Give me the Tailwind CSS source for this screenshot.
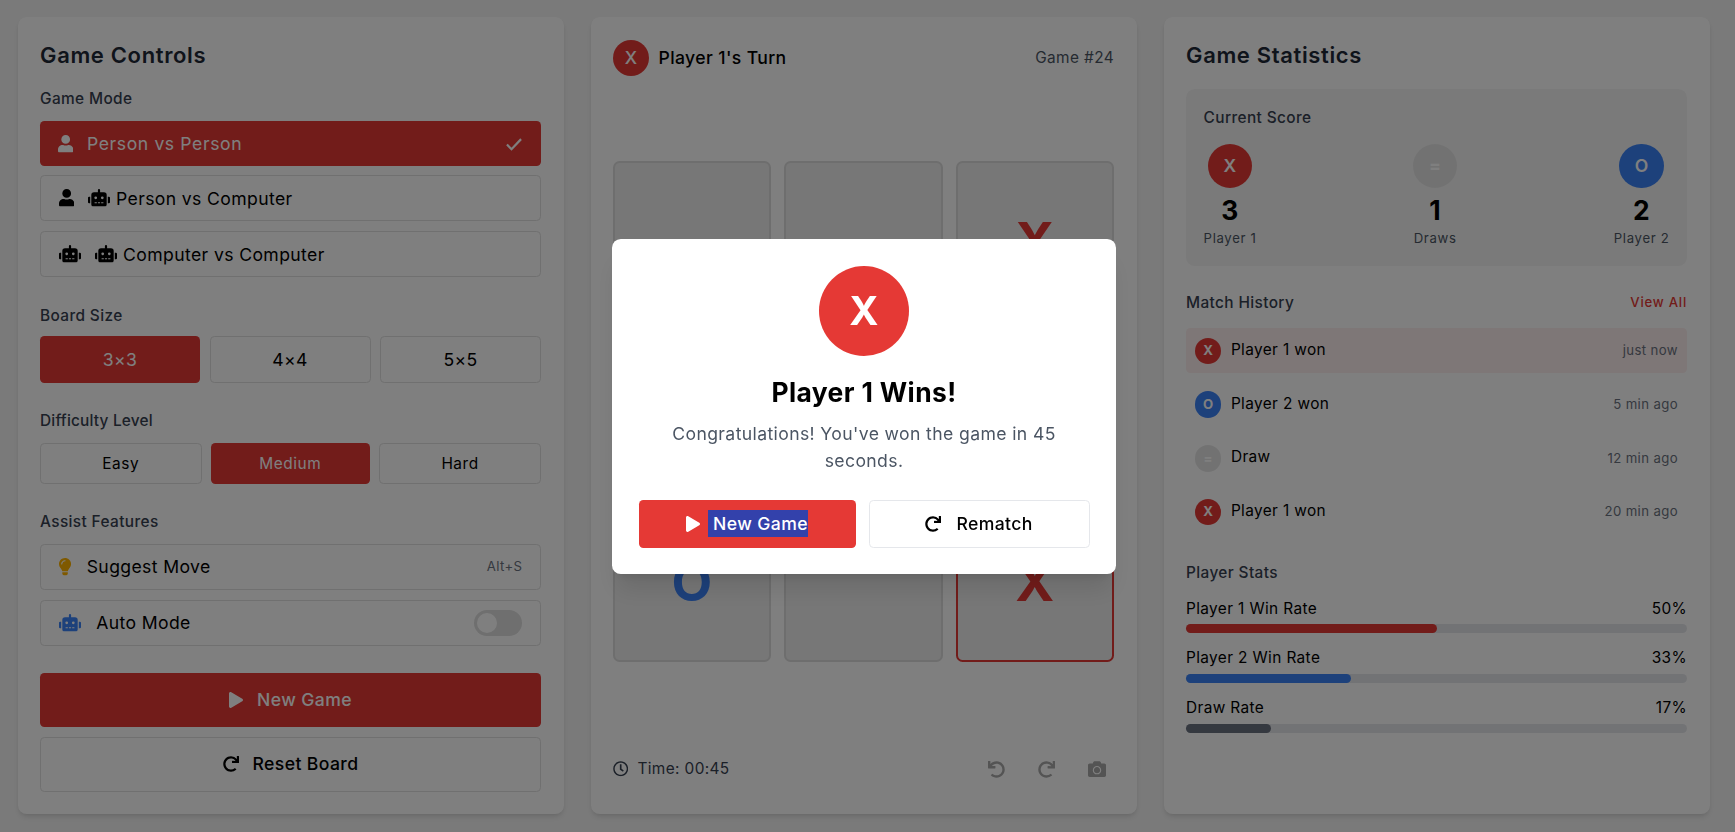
<!DOCTYPE html>
<html lang="en" class="text-[17.6px] font-[Inter,sans-serif] tracking-[0.38px]">
<head>
<meta charset="UTF-8">
<meta name="viewport" content="width=device-width, initial-scale=1.0">
<title>Tic Tac Toe</title>
<script src="https://cdn.jsdelivr.net/npm/@tailwindcss/browser@4"></script>
</head>
<body class="h-screen overflow-hidden bg-[#f5f5f5] text-[#111111]">

<!-- icon set -->
<svg class="hidden">
  <symbol id="i-user" viewBox="0 0 448 512"><path fill="currentColor" d="M224 256c70.7 0 128-57.3 128-128S294.7 0 224 0 96 57.3 96 128s57.3 128 128 128zm89.6 32h-16.7c-22.2 10.2-46.9 16-72.9 16s-50.6-5.8-72.9-16h-16.7C60.2 288 0 348.2 0 422.4V464c0 26.5 21.5 48 48 48h352c26.5 0 48-21.5 48-48v-41.6c0-74.2-60.2-134.4-134.4-134.4z"/></symbol>
  <symbol id="i-robot" viewBox="0 0 640 512"><path fill="currentColor" d="M32,224H64V416H32A31.96166,31.96166,0,0,1,0,384V256A31.96166,31.96166,0,0,1,32,224Zm512-48V448a64.06328,64.06328,0,0,1-64,64H160a64.06328,64.06328,0,0,1-64-64V176a79.974,79.974,0,0,1,80-80H288V32a32,32,0,0,1,64,0V96H464A79.974,79.974,0,0,1,544,176ZM264,256a40,40,0,1,0-40,40A39.997,39.997,0,0,0,264,256Zm-8,128H192v32h64Zm96,0H288v32h64ZM456,256a40,40,0,1,0-40,40A39.997,39.997,0,0,0,456,256Zm-8,128H384v32h64ZM640,256V384a31.96166,31.96166,0,0,1-32,32H576V224h32A31.96166,31.96166,0,0,1,640,256Z"/></symbol>
  <symbol id="i-check" viewBox="0 0 512 512"><path fill="none" stroke="currentColor" stroke-width="70" d="M30 275 L176 421 L482 100"/></symbol>
  <symbol id="i-bulb" viewBox="0 0 352 512"><path fill="currentColor" d="M96.06 454.35c.01 6.29 1.87 12.45 5.36 17.69l17.09 25.69a31.99 31.99 0 0 0 26.64 14.28h61.71a31.99 31.99 0 0 0 26.64-14.28l17.09-25.69a31.989 31.989 0 0 0 5.36-17.69l.04-38.35H96.01l.05 38.35zM0 176c0 44.37 16.45 84.85 43.56 115.78 16.52 18.85 42.36 58.23 52.21 91.45.04.26.07.52.11.78h160.24c.04-.26.07-.51.11-.78 9.85-33.22 35.69-72.6 52.21-91.45C335.55 260.85 352 220.37 352 176 352 78.61 272.91-.3 175.45 0 73.44.31 0 82.97 0 176zm176-80c-44.11 0-80 35.89-80 80 0 8.84-7.16 16-16 16s-16-7.16-16-16c0-61.76 50.24-112 112-112 8.84 0 16 7.16 16 16s-7.16 16-16 16z"/></symbol>
  <symbol id="i-play" viewBox="0 0 448 512"><path fill="currentColor" d="M424.4 214.7L72.4 6.6C43.8-10.3 0 6.1 0 47.9V464c0 37.5 40.7 60.1 72.4 41.3l352-208c31.4-18.5 31.5-64.1 0-82.6z"/></symbol>
  <symbol id="i-redo" viewBox="0 0 512 512"><path fill="currentColor" d="M500.33 0h-47.41a12 12 0 0 0-12 12.57l4 82.76A247.42 247.42 0 0 0 256 8C119.34 8 7.9 119.53 8 256.19 8.1 393.07 119.1 504 256 504a247.1 247.1 0 0 0 166.18-63.91 12 12 0 0 0 .48-17.43l-34-34a12 12 0 0 0-16.38-.55A176 176 0 1 1 402.1 157.8l-101.53-4.87a12 12 0 0 0-12.57 12v47.41a12 12 0 0 0 12 12h200.33a12 12 0 0 0 12-12V12a12 12 0 0 0-12-12z"/></symbol>
  <symbol id="i-undo" viewBox="0 0 512 512"><path fill="currentColor" d="M212.333 224.333H12c-6.627 0-12-5.373-12-12V12C0 5.373 5.373 0 12 0h48c6.627 0 12 5.373 12 12v78.112C117.773 39.279 184.26 7.47 258.175 8.007c136.906.994 246.448 111.623 246.157 248.532C504.041 393.258 393.12 504 256.333 504c-64.089 0-122.496-24.313-166.51-64.215-5.099-4.622-5.334-12.554-.467-17.42l33.967-33.967c4.474-4.474 11.662-4.717 16.401-.525C170.76 415.336 211.58 432 256.333 432c97.268 0 176-78.716 176-176 0-97.267-78.716-176-176-176-58.496 0-110.28 28.476-142.274 72.333h98.274c6.627 0 12 5.373 12 12v48c0 6.627-5.373 12-12 12z"/></symbol>
  <symbol id="i-camera" viewBox="0 0 512 512"><path fill="currentColor" d="M512 144v288c0 26.5-21.5 48-48 48H48c-26.5 0-48-21.5-48-48V144c0-26.5 21.5-48 48-48h88l12.3-32.9c7-18.7 24.9-31.1 44.9-31.1h125.5c20 0 37.9 12.4 44.9 31.1L376 96h88c26.5 0 48 21.5 48 48zM376 288c0-66.2-53.8-120-120-120s-120 53.8-120 120 53.8 120 120 120 120-53.8 120-120zm-32 0c0 48.5-39.5 88-88 88s-88-39.5-88-88 39.5-88 88-88 88 39.5 88 88z"/></symbol>
  <symbol id="i-clock" viewBox="0 0 512 512"><path fill="currentColor" d="M256 8C119 8 8 119 8 256s111 248 248 248 248-111 248-248S393 8 256 8zm0 448c-110.5 0-200-89.5-200-200S145.5 56 256 56s200 89.5 200 200-89.5 200-200 200zm61.8-104.4l-84.9-61.7c-3.1-2.3-4.9-5.9-4.9-9.7V116c0-6.6 5.4-12 12-12h32c6.6 0 12 5.4 12 12v141.7l66.8 48.6c5.4 3.9 6.5 11.4 2.6 16.8L334.6 349c-3.9 5.3-11.4 6.5-16.8 2.6z"/></symbol>
</svg>

<div class="grid grid-cols-3 gap-[27px] w-[1692px] h-[797px] ml-[18px] mt-[17px]">

  <!-- game controls -->
  <section class="bg-white rounded-lg shadow-md pl-[22px] pr-[23px] pt-[23px]">
    <h2 class="text-xl font-semibold text-[#1f2937] tracking-[0.65px] mb-[17.5px]">Game Controls</h2>

    <div class="text-sm font-medium text-[#374151] mb-[11px]">Game Mode</div>
    <div class="flex items-center h-[45px] px-4 mb-[8.5px] rounded bg-[#e53935] text-white">
      <svg class="w-[15.4px] h-[17.6px] mr-[14px]"><use href="#i-user"/></svg>
      <span class="tracking-[0.6px]">Person vs Person</span>
      <svg class="w-[16px] h-[16px] ml-auto mr-[1px]"><use href="#i-check"/></svg>
    </div>
    <div class="flex items-center h-[46px] px-4 mb-[10px] rounded border border-[#e0e0e0]">
      <svg class="w-[15.4px] h-[17.6px] mr-[14px] text-black"><use href="#i-user"/></svg>
      <svg class="w-[22px] h-[17.6px] mr-[6px] text-black"><use href="#i-robot"/></svg>
      <span class="text-black pt-[2px]">Person vs Computer</span>
    </div>
    <div class="flex items-center h-[46px] px-4 mb-[27px] rounded border border-[#e0e0e0]">
      <svg class="w-[22px] h-[17.6px] mr-[14.5px] text-black"><use href="#i-robot"/></svg>
      <svg class="w-[22px] h-[17.6px] mr-[6px] text-black"><use href="#i-robot"/></svg>
      <span class="text-black pt-[2px]">Computer vs Computer</span>
    </div>

    <div class="text-sm font-medium text-[#374151] mt-[28px] mb-[9.5px]">Board Size</div>
    <div class="grid grid-cols-[160px_161px_161px] gap-[9.5px] mb-[26.5px] h-[47px] text-black">
      <div class="flex items-center justify-center rounded bg-[#e53935] text-white">3×3</div>
      <div class="flex items-center justify-center rounded border border-[#e0e0e0]">4×4</div>
      <div class="flex items-center justify-center rounded border border-[#e0e0e0]">5×5</div>
    </div>

    <div class="text-sm font-medium text-[#374151] tracking-[0.2px] mb-[11px]">Difficulty Level</div>
    <div class="grid grid-cols-[161.5px_159px_162px] gap-[9.25px] mb-[26.5px] h-[41.5px] text-black text-sm tracking-[0.55px]">
      <div class="flex items-center justify-center rounded border border-[#e0e0e0]">Easy</div>
      <div class="flex items-center justify-center rounded bg-[#e53935] text-white">Medium</div>
      <div class="flex items-center justify-center rounded border border-[#e0e0e0]">Hard</div>
    </div>

    <div class="text-sm font-medium text-[#374151] mb-[11px]">Assist Features</div>
    <div class="flex items-center h-[46px] px-4 mb-[10px] rounded border border-[#e0e0e0] text-black">
      <svg class="w-[12.1px] h-[17.6px] mr-[16px] text-[#ffb300]"><use href="#i-bulb"/></svg>
      <span>Suggest Move</span>
      <span class="ml-auto text-xs text-[#6b7280]">Alt+S</span>
    </div>
    <div class="flex items-center h-[46.5px] px-4 mb-[27px] rounded border border-[#e0e0e0] text-black">
      <svg class="w-[22px] h-[17.6px] mr-[15.6px] text-[#3b82f6]"><use href="#i-robot"/></svg>
      <span>Auto Mode</span>
      <span class="ml-auto w-[48.4px] h-[26.4px] rounded-full bg-[#dedede] flex items-center pl-[3px]">
        <span class="w-[20px] h-[20px] rounded-full bg-white"></span>
      </span>
    </div>

    <div class="flex items-center justify-center h-[54px] mb-[9.5px] rounded bg-[#e53935] text-white font-medium">
      <svg class="w-[14px] h-[16px] mr-[14px]"><use href="#i-play"/></svg>
      <span>New Game</span>
    </div>
    <div class="flex items-center justify-center h-[55px] rounded border border-[#e0e0e0] text-black font-medium">
      <svg class="w-[16px] h-[16px] mr-[14px]"><use href="#i-redo"/></svg>
      <span>Reset Board</span>
    </div>
  </section>

  <!-- board -->
  <section class="bg-white rounded-lg shadow-md pl-[22px] pr-[23px] pt-[23px]">
    <div class="flex items-center justify-between h-[36px] mb-[85px]">
      <div class="flex items-center gap-[9.5px]">
        <span class="flex items-center justify-center w-[36px] h-[36px] rounded-full bg-[#e53935] text-white font-medium">X</span>
        <span class="text-black font-medium">Player 1's Turn</span>
      </div>
      <span class="text-sm text-[#4b5563]">Game #24</span>
    </div>

    <div class="grid grid-cols-3 grid-rows-3 gap-[13.2px] w-[501px] h-[501px]">
      <div class="flex items-center justify-center rounded-md border-2 border-[#dcdcdc] bg-[#eeeeee]"></div>
      <div class="flex items-center justify-center rounded-md border-2 border-[#dcdcdc] bg-[#eeeeee]"></div>
      <div class="flex items-center justify-center rounded-md border-2 border-[#dcdcdc] bg-[#eeeeee] text-5xl font-bold text-[#e53935] pt-[2px]">X</div>
      <div class="flex items-center justify-center rounded-md border-2 border-[#dcdcdc] bg-[#eeeeee]"></div>
      <div class="flex items-center justify-center rounded-md border-2 border-[#dcdcdc] bg-[#eeeeee]"></div>
      <div class="flex items-center justify-center rounded-md border-2 border-[#e53935] bg-[#eeeeee]"></div>
      <div class="flex items-center justify-center rounded-md border-2 border-[#dcdcdc] bg-[#eeeeee] text-5xl font-bold text-[#3b82f6]">O</div>
      <div class="flex items-center justify-center rounded-md border-2 border-[#dcdcdc] bg-[#eeeeee]"></div>
      <div class="flex items-center justify-center rounded-md border-2 border-[#e53935] bg-[#eeeeee] text-5xl font-bold text-[#e53935]">X</div>
    </div>

    <div class="flex items-center justify-between mt-[96px]">
      <div class="flex items-center gap-[9px] text-sm text-[#374151]">
        <svg class="w-[15.4px] h-[15.4px]"><use href="#i-clock"/></svg>
        <span>Time: 00:45</span>
      </div>
      <div class="flex items-center gap-[33px] pr-[8px] text-[#a8a8a8]">
        <svg class="w-[17px] h-[17px]"><use href="#i-undo"/></svg>
        <svg class="w-[17px] h-[17px]"><use href="#i-redo"/></svg>
        <svg class="w-[18px] h-[18px]"><use href="#i-camera"/></svg>
      </div>
    </div>
  </section>

  <!-- statistics -->
  <section class="bg-white rounded-lg shadow-md pl-[22px] pr-[23px] pt-[23px]">
    <h2 class="text-xl font-semibold text-[#1f2937] tracking-[0.65px] mb-[18px]">Game Statistics</h2>

    <div class="bg-[#f5f5f5] rounded-lg p-[17.6px] pt-[18.6px] h-[177px] mb-[26px]">
      <div class="text-sm font-medium text-[#374151] mb-[14.5px]">Current Score</div>
      <div class="flex justify-between items-start">
        <div class="flex flex-col items-center">
          <span class="flex items-center justify-center w-[44.5px] h-[44.5px] rounded-full bg-[#e53935] text-white font-semibold">X</span>
          <span class="text-2xl font-bold text-black mt-[5px]">3</span>
          <span class="text-xs text-[#4b5563] tracking-[0.65px] mt-[1px]">Player 1</span>
        </div>
        <div class="flex flex-col items-center">
          <span class="flex items-center justify-center w-[44.5px] h-[44.5px] rounded-full bg-[#e5e5e5] text-white font-bold">=</span>
          <span class="text-2xl font-bold text-black mt-[5px]">1</span>
          <span class="text-xs text-[#4b5563] tracking-[0.65px] mt-[1px]">Draws</span>
        </div>
        <div class="flex flex-col items-center">
          <span class="flex items-center justify-center w-[44.5px] h-[44.5px] rounded-full bg-[#3b82f6] text-white font-semibold">O</span>
          <span class="text-2xl font-bold text-black mt-[5px]">2</span>
          <span class="text-xs text-[#4b5563] tracking-[0.65px] mt-[1px]">Player 2</span>
        </div>
      </div>
    </div>

    <div class="flex items-center justify-between mb-[14.5px]">
      <span class="text-sm font-medium text-[#374151]">Match History</span>
      <span class="text-xs font-medium text-[#e53935] tracking-[0.75px]">View All</span>
    </div>

    <div class="flex flex-col gap-[8.8px] mb-[27px] text-sm text-black">
      <div class="flex items-center gap-[9.5px] h-[45px] px-[9px] rounded bg-[#fdeeee]">
        <span class="flex items-center justify-center w-[26.4px] h-[26.4px] rounded-full bg-[#e53935] text-white text-xs font-bold">X</span>
        <span class="pb-[2px]">Player 1 won</span>
        <span class="ml-auto text-xs text-[#6b7280]">just now</span>
      </div>
      <div class="flex items-center gap-[9.5px] h-[45px] px-[9px]">
        <span class="flex items-center justify-center w-[26.4px] h-[26.4px] rounded-full bg-[#3b82f6] text-white text-xs font-bold">O</span>
        <span class="pb-[2px]">Player 2 won</span>
        <span class="ml-auto text-xs text-[#6b7280]">5 min ago</span>
      </div>
      <div class="flex items-center gap-[9.5px] h-[45px] px-[9px]">
        <span class="flex items-center justify-center w-[26.4px] h-[26.4px] rounded-full bg-[#e5e5e5] text-white text-xs font-bold">=</span>
        <span class="pb-[2px]">Draw</span>
        <span class="ml-auto text-xs text-[#6b7280]">12 min ago</span>
      </div>
      <div class="flex items-center gap-[9.5px] h-[45px] px-[9px]">
        <span class="flex items-center justify-center w-[26.4px] h-[26.4px] rounded-full bg-[#e53935] text-white text-xs font-bold">X</span>
        <span class="pb-[2px]">Player 1 won</span>
        <span class="ml-auto text-xs text-[#6b7280]">20 min ago</span>
      </div>
    </div>

    <div class="text-sm font-medium text-[#374151] mb-[14.5px]">Player Stats</div>
    <div class="flex flex-col gap-[13.7px] text-sm text-black">
      <div>
        <div class="flex justify-between mb-[4.3px]"><span>Player 1 Win Rate</span><span>50%</span></div>
        <div class="h-[8.8px] rounded-full bg-[#e5e7eb]"><div class="h-full rounded-full bg-[#e53935]" style="width:50%"></div></div>
      </div>
      <div>
        <div class="flex justify-between mb-[5.3px]"><span>Player 2 Win Rate</span><span>33%</span></div>
        <div class="h-[8.8px] rounded-full bg-[#e5e7eb]"><div class="h-full rounded-full bg-[#3b82f6]" style="width:33%"></div></div>
      </div>
      <div>
        <div class="flex justify-between mb-[5.3px]"><span>Draw Rate</span><span>17%</span></div>
        <div class="h-[8.8px] rounded-full bg-[#e5e7eb]"><div class="h-full rounded-full bg-[#6b7280]" style="width:17%"></div></div>
      </div>
    </div>
  </section>
</div>

<!-- win dialog -->
<div class="fixed inset-0 bg-black/50">
  <div class="absolute left-[612px] top-[239px] w-[504px] h-[335px] bg-white rounded-lg shadow-xl px-[26.5px] pt-[27px] flex flex-col items-center">
    <span class="flex items-center justify-center w-[90px] h-[90px] rounded-full bg-[#e53935] text-white text-4xl font-bold shrink-0">X</span>
    <h3 class="text-2xl font-bold text-black mt-[18.5px]">Player 1 Wins!</h3>
    <p class="text-center text-[#4b5563] leading-[27px] mt-[10px]">Congratulations! You've won the game in 45 seconds.</p>
    <div class="flex gap-[13.2px] w-full mt-[26px]">
      <div class="flex items-center justify-center w-[217px] h-[48px] rounded bg-[#e53935] text-white font-medium">
        <svg class="w-[14px] h-[16px] mr-[8px]"><use href="#i-play"/></svg>
        <span class="bg-[#3341ab] pl-[5px] leading-[27px]">New Game</span>
      </div>
      <div class="flex flex-1 items-center justify-center h-[48px] rounded border border-[#e5e7eb] text-black font-medium">
        <svg class="w-[16px] h-[16px] mr-[15px]"><use href="#i-redo"/></svg>
        <span>Rematch</span>
      </div>
    </div>
  </div>
</div>
</body>
</html>
